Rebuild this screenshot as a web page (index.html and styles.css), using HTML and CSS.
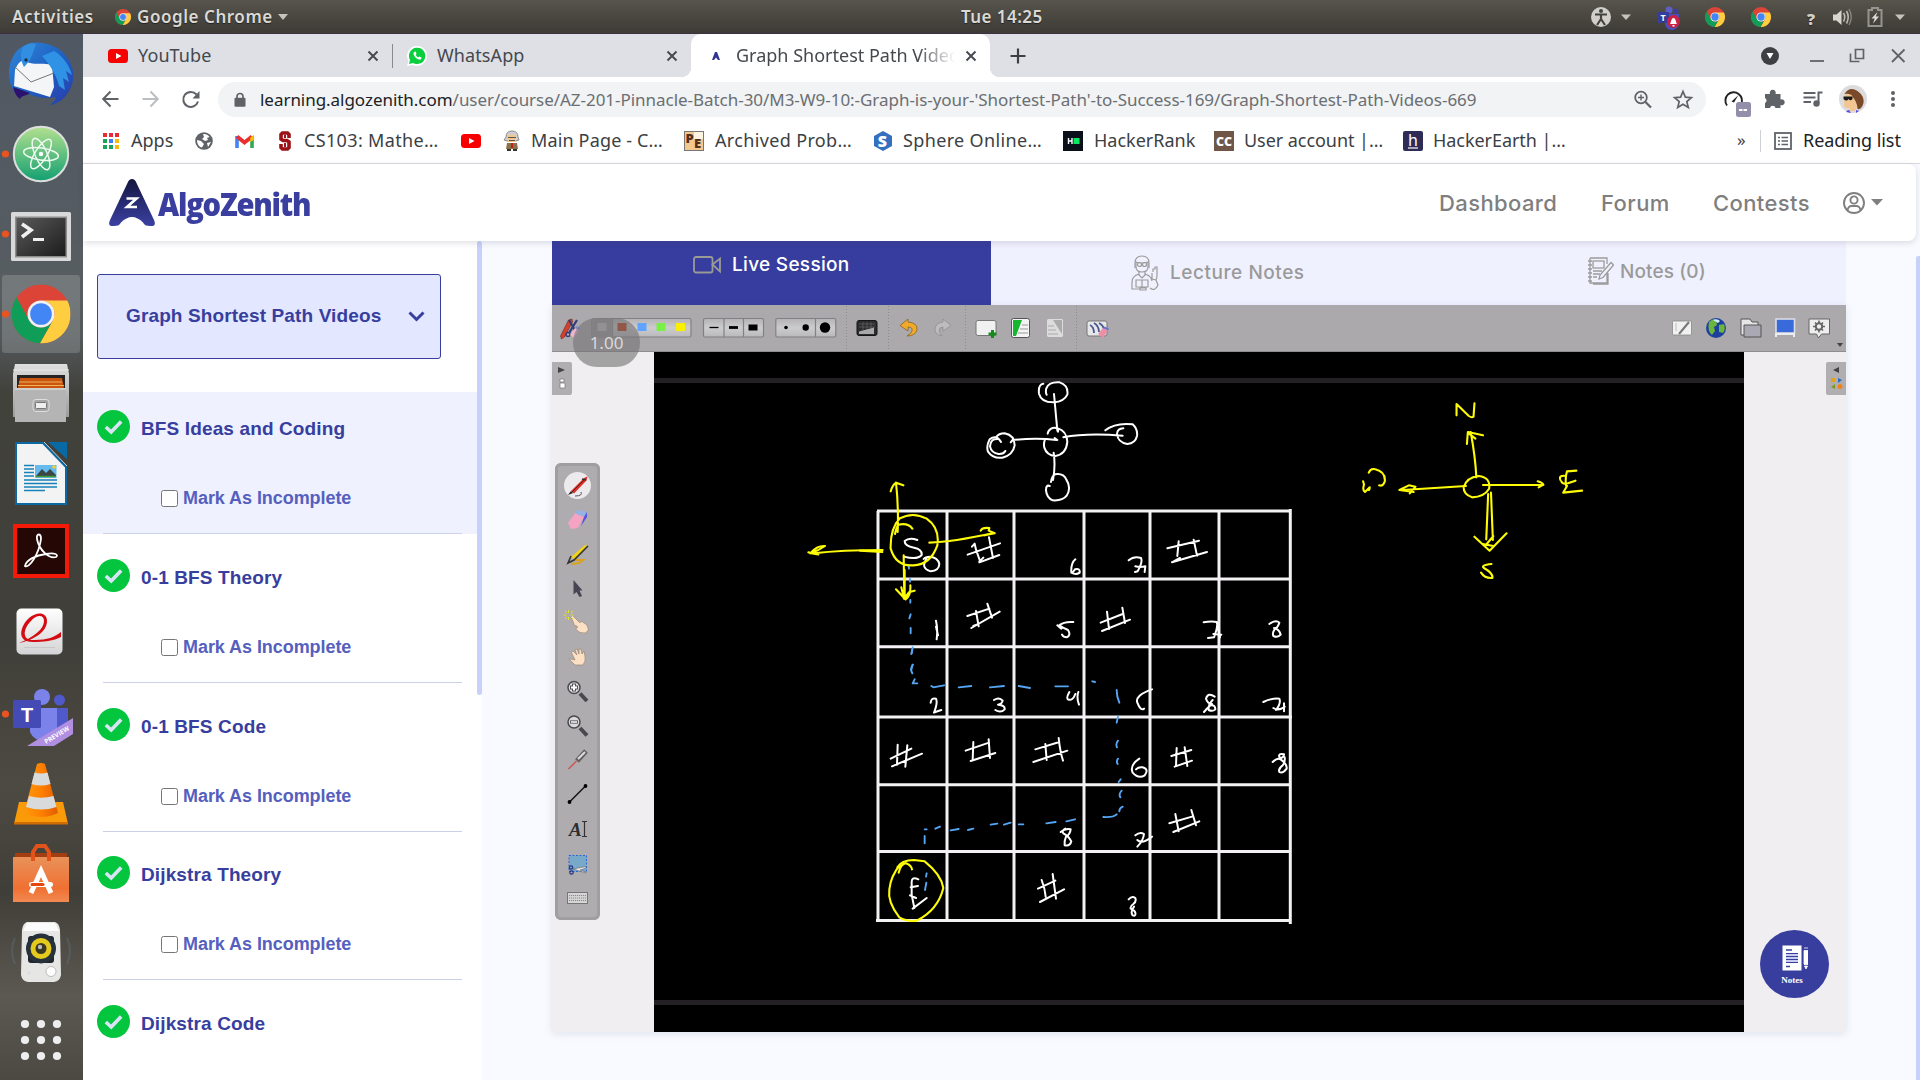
FILE: index.html
```html
<!DOCTYPE html>
<html lang="en">
<head>
<meta charset="utf-8">
<title>Graph Shortest Path Videos</title>
<link rel="stylesheet" href="styles.css">
</head>
<body>
<svg class="defs" aria-hidden="true">
  <defs>
    <linearGradient id="gAtom" x1="0" y1="0" x2="0" y2="1"><stop offset="0" stop-color="#b3e08f"/><stop offset="1" stop-color="#12a071"/></linearGradient>
    <linearGradient id="gMetal" x1="0" y1="0" x2="0" y2="1"><stop offset="0" stop-color="#dedede"/><stop offset="1" stop-color="#9c9c9c"/></linearGradient>
    <linearGradient id="gTerm" x1="0" y1="0" x2="1" y2="1"><stop offset="0" stop-color="#5a5a5a"/><stop offset="1" stop-color="#1c1c1c"/></linearGradient>
    <linearGradient id="gWhite" x1="0" y1="0" x2="0" y2="1"><stop offset="0" stop-color="#fff"/><stop offset="1" stop-color="#d4d4d6"/></linearGradient>
    <linearGradient id="gOrange" x1="0" y1="0" x2="1" y2="0"><stop offset="0" stop-color="#ff9a0a"/><stop offset=".5" stop-color="#ff8000"/><stop offset="1" stop-color="#e05c00"/></linearGradient>
    <linearGradient id="gBag" x1="0" y1="0" x2="0" y2="1"><stop offset="0" stop-color="#e8925a"/><stop offset=".7" stop-color="#f07033"/><stop offset="1" stop-color="#f28a52"/></linearGradient>
    <linearGradient id="gBird" x1="0" y1="0" x2="1" y2="1"><stop offset="0" stop-color="#2f86d8"/><stop offset=".5" stop-color="#1f62c4"/><stop offset="1" stop-color="#2a3aa8"/></linearGradient>
    <linearGradient id="gLogo" x1="0" y1="0" x2="0" y2="1"><stop offset="0" stop-color="#14163f"/><stop offset="1" stop-color="#3b41a3"/></linearGradient>
    <linearGradient id="gGroup" x1="0" y1="0" x2="0" y2="1"><stop offset="0" stop-color="#b4b2b4"/><stop offset=".5" stop-color="#cccbcd"/><stop offset="1" stop-color="#b9b8ba"/></linearGradient>
    <symbol id="chrome" viewBox="0 0 48 48">
      <circle cx="24" cy="24" r="24" fill="#db4437"/>
      <path fill="#ffcd40" d="M24 13h21.4A24 24 0 0 1 23 48l10.500-18.500A11 11 0 0 0 24 13z"/>
      <path fill="#0f9d58" d="M23 48A24 24 0 0 1 4.200 10.500L14.500 29.500a11 11 0 0 0 19 0z"/>
      <circle cx="24" cy="24" r="11" fill="#f1f1f1"/><circle cx="24" cy="24" r="8.800" fill="#4285f4"/>
    </symbol>
    <symbol id="youtube" viewBox="0 0 20 16"><rect y="1" width="20" height="14" rx="3.500" fill="#f60002"/><path d="M8 5l5.500 3L8 11z" fill="#fff"/></symbol>
    <symbol id="close" viewBox="0 0 12 12"><path d="M1.500 1.500l9 9m0-9l-9 9" stroke="#45484d" stroke-width="1.900"/></symbol>
    <symbol id="done" viewBox="0 0 33 33"><circle cx="16.500" cy="16.500" r="16.500" fill="#04c53e"/><path d="M8.800 17l5.400 5L24.200 11.500" fill="none" stroke="#d8e3f5" stroke-width="3.600"/></symbol>
  </defs>
</svg>

<header class="topbar">
  <span class="activities">Activities</span>
  <svg class="mini-chrome" width="16" height="18"><use href="#chrome"/></svg>
  <span class="appname">Google Chrome</span>
  <svg class="menu-caret" width="10" height="6"><path d="M0 0h10L5 6z" fill="#c5c3bd"/></svg>
  <span class="clock">Tue 14:25</span>
  <svg class="tray" viewBox="1580 0 340 34" width="340" height="34">
    <circle cx="1601" cy="17" r="10" fill="#d0cfcb"/>
    <circle cx="1601" cy="11" r="2" fill="#45433d"/><path d="M1595 14.500h12M1601 14v5l-4 6M1601 19l4 6" stroke="#45433d" stroke-width="2.200" fill="none"/>
    <path d="M1621 14.500h10l-5 5.500z" fill="#c5c3bd"/>
    <circle cx="1669" cy="10" r="3.500" fill="#5b5fc7"/><circle cx="1676" cy="11" r="2.500" fill="#3d3fa0"/><path d="M1665 14h14v8a7 7 0 0 1-14 2z" fill="#4b4fb8"/><rect x="1658" y="12" width="11" height="11" fill="#373c9f"/>
    <text x="1660.500" y="21" font-family="Open Sans" font-weight="700" font-size="9" fill="#fff">T</text>
    <circle cx="1673.500" cy="21.500" r="6.500" fill="#c92246"/><path d="M1670 24c1-1 1-6 3.500-6s2.500 5 3.500 6zM1672.500 25h2v1.500h-2z" fill="#fff"/>
    <use href="#chrome" x="1705" y="7" width="20" height="20"/><use href="#chrome" x="1751" y="7" width="20" height="20"/>
    <text x="1807" y="25" font-family="Open Sans" font-weight="800" font-size="16" fill="#d2d0cb">?</text>
    <path d="M1833 14.500h3.500l5-4.500v15l-5-4.500h-3.500z" fill="#d6d5d0"/><path d="M1843.500 13q2.500 4 0 8.500M1846.500 11q3.500 6 0 12.500" stroke="#bbb9b3" stroke-width="1.600" fill="none"/><path d="M1849 9q4.500 8 0 16" stroke="#88867f" stroke-width="1.400" fill="none"/>
    <path d="M1872 8h6v2h3.500v16h-13V10h3.500z" fill="none" stroke="#96948e" stroke-width="2"/><path d="M1877.500 12l-6 6.500h3.200l-1.700 5 6-7h-3.200z" fill="#dddcd8"/>
    <path d="M1895 14.500h10l-5 5.500z" fill="#c5c3bd"/>
  </svg>
</header>

<div class="desktop">
  <nav class="dock">
    <svg viewBox="0 34 83 80">
      <path d="M29 44c8-3 20-1 30 5 10 8 16 20 14 31-2 12-11 24-24 25 4-2 6-4 7-8-12 3-25-1-33-6l-3 7c-6-5-10-12-11-21-1-13 4-25 14-31z" fill="url(#gBird)"/>
      <path d="M15 70c3-7 6-10 10-9 8 5 16 1 27 4l2 22-4 10-36-11z" fill="#f4f5f7"/><path d="M14 66l17 16 23-9" fill="none" stroke="#777" stroke-width="1"/>
      <path d="M54 51c9 5 15 14 18 24l-6-4 3 11-6-4 2 12-6-4c-3-13-10-22-17-30z" fill="#2f92e4"/><path d="M22 49c2-4 8-7 14-5-3 8-5 17-12 23-3-6-4-12-2-18z" fill="#328ee0"/><circle cx="26" cy="60" r="1.700" fill="#1c2a46"/>
      <path d="M13 87l17 6c-4 3-8 2-10 6-3-2-6-7-7-12z" fill="#2a126e"/>
    </svg>
    <svg viewBox="0 114 83 80"><circle cx="5.500" cy="154" r="3.600" fill="#e95420"/><circle cx="41" cy="154" r="27.200" fill="url(#gAtom)" stroke="#dcdfdd" stroke-width="2"/>
      <g fill="none" stroke="#eefaf0" stroke-width="1.500"><ellipse cx="41" cy="154" rx="17.500" ry="6" transform="rotate(8 41 154)"/><ellipse cx="41" cy="154" rx="17" ry="6" transform="rotate(66 41 154)"/><ellipse cx="41" cy="154" rx="17" ry="6" transform="rotate(-58 41 154)"/></g><circle cx="41" cy="154" r="2.200" fill="#fff"/></svg>
    <svg viewBox="0 194 83 80"><circle cx="5.500" cy="234" r="3.600" fill="#e95420"/><rect x="11" y="212" width="60" height="49" rx="1.500" fill="#d9d9d9"/><rect x="15" y="216.500" width="52" height="41" fill="#8d8d8d"/><rect x="16.500" y="218" width="49" height="38" fill="url(#gTerm)"/><path d="M22 224l9 6-9 7" fill="none" stroke="#f0f0f0" stroke-width="3.600"/><path d="M33 239.500h11" stroke="#f0f0f0" stroke-width="3"/></svg>
    <svg viewBox="0 274 83 80"><rect x="2" y="275" width="78" height="78" rx="3" fill="#fff" fill-opacity=".17"/><circle cx="5.500" cy="314" r="3.600" fill="#e95420"/><use href="#chrome" x="11.500" y="284.500" width="59" height="59"/></svg>
    <svg viewBox="0 354 83 80"><path d="M15 364h52l2 10v43H13v-43z" fill="url(#gMetal)"/><path d="M13 370h56" stroke="#e9e9e9"/><rect x="17" y="375" width="48" height="14" fill="#262322"/><path d="M20 378h42l2 10H18z" fill="#c9550f"/><path d="M19 382h43M18 385.500h46" stroke="#f2b25c" stroke-width="1.200"/><path d="M15 388h51v34H15z" fill="#b4b4b4"/><path d="M15 389h51" stroke="#d9d9d9" stroke-width="1.500"/><rect x="33" y="399.500" width="16" height="12" rx="3" fill="#a6a6a6" stroke="#dedede"/><rect x="35.500" y="402.500" width="11" height="6" rx="1" fill="#eee" stroke="#777"/></svg>
    <svg viewBox="0 434 83 80"><path d="M16 443h27l23 24v37H16z" fill="#f3f3f4" stroke="#0c68a3" stroke-width="2"/><path d="M48 442h19v17z" fill="#0869a5"/><path d="M44 442l23 24" stroke="#cfcfcf"/><path d="M24 465.500h10M24 469h10M24 472.500h10M24 476h10M24 480h33M24 483.500h33M24 487h33M24 490.500h21" stroke="#1682bb" stroke-width="1.600"/><rect x="35" y="465" width="21.500" height="13" fill="#66bbee"/><path d="M36 476l6-7 4 4 4-4 6 6v1z" fill="#3b4647"/><path d="M36 476.500h20" stroke="#3f9a3a" stroke-width="1.500"/><circle cx="54" cy="467" r="1.800" fill="#f6cf2b"/></svg>
    <svg viewBox="0 514 83 80"><rect x="15" y="526" width="52" height="50" fill="#250706" stroke="#f51a08" stroke-width="4"/><path d="M25 566c4 3 14-12 16-27 0-6-5-6-4 0 2 11 12 20 19 18 3-2-1-5-10-3-10 1-20 6-21 12z" fill="none" stroke="#fff" stroke-width="1.800"/></svg>
    <svg viewBox="0 594 83 80"><rect x="16.500" y="608.500" width="46" height="46" rx="5" fill="url(#gWhite)"/><path d="M19 643c15-6 25-14 25-22 0-7-8-6-13 0-8 8-10 20 4 19 12 0 20-3 26-8v5c-7 4-18 5-28 5-18 0-12-17-4-24 8-7 18-6 18 3 0 11-13 19-28 22z" fill="#d40d12"/><path d="M24 647.500h31" stroke="#c8c8c8"/></svg>
    <svg viewBox="0 674 83 80"><circle cx="5.500" cy="714" r="3.600" fill="#e95420"/><circle cx="42" cy="697" r="8" fill="#7b83eb"/><circle cx="59.500" cy="700" r="5.500" fill="#5059c9"/><path d="M50 708h18v24H50z" fill="#5059c9"/><path d="M30 708h27v20a14 14 0 0 1-27 4z" fill="#7b83eb"/><rect x="13" y="700" width="28" height="28" rx="1.500" fill="#454bb5"/><text x="21" y="721.500" font-family="Liberation Sans" font-weight="700" font-size="20" fill="#fff">T</text><path d="M27 746l46-28v16l-19 12z" fill="#b08ee2"/><text transform="translate(46 744) rotate(-31)" font-family="Open Sans" font-weight="700" font-size="6.400" fill="#fff">PREVIEW</text></svg>
    <svg viewBox="0 754 83 80"><path d="M19 802h44l5 22H14z" fill="#fb9a09"/><path d="M14 822h54v2.500H14z" fill="#cf6d00"/><path d="M37 764q4-2 8 0l13 49q-17 8-34 0z" fill="url(#gOrange)"/><path d="M34.500 772.500q6.500 2 13 0l3 11.500q-9.500 3-19 0zM29 796q12 3.500 24.500 0l3 11q-15 5-30.500 0z" fill="#d9dadc"/></svg>
    <svg viewBox="0 834 83 80"><path d="M15 853h52v9H15z" fill="#a33e12"/><path d="M13 857h56v45H13z" fill="url(#gBag)"/><path d="M33 861v-9l4-6h8l4 6v9" fill="none" stroke="#e2531c" stroke-width="4"/><path d="M31 893l10-22 10 22" fill="none" stroke="#fff" stroke-width="5"/><rect x="29" y="882" width="24" height="5" rx="2.500" fill="#fff"/><rect x="30.500" y="883" width="14" height="3" rx="1.500" fill="#e5470f"/></svg>
    <svg viewBox="0 914 83 80"><path d="M15 938q-6 12 0 26M67 938q6 12 0 26" fill="none" stroke="#65778a" stroke-opacity=".35" stroke-width="2"/><path d="M27 922h28q4 1 5 8l1 45q-1 6-7 7H28q-6-1-7-7l1-45q1-7 5-8z" fill="#e6e6e5"/><path d="M27 923h28l4 8H23z" fill="#fbfbfb"/><rect x="28" y="936" width="26" height="27" rx="3" fill="#20262c"/><circle cx="41" cy="948.500" r="15" fill="#26313c"/><circle cx="41" cy="948.500" r="10.500" fill="#e3ca1d"/><circle cx="41" cy="948.500" r="5.500" fill="#3a3823"/><circle cx="40" cy="947" r="2.200" fill="#bbb"/><circle cx="51" cy="971.500" r="5" fill="#fff" stroke="#bbb"/><circle cx="29" cy="973" r="1.800" fill="#ddd"/></svg>
    <svg viewBox="0 994 83 80" fill="#eee"><circle cx="25" cy="1024" r="4.100"/><circle cx="41" cy="1024" r="4.100"/><circle cx="57" cy="1024" r="4.100"/><circle cx="25" cy="1040" r="4.100"/><circle cx="41" cy="1040" r="4.100"/><circle cx="57" cy="1040" r="4.100"/><circle cx="25" cy="1056" r="4.100"/><circle cx="41" cy="1056" r="4.100"/><circle cx="57" cy="1056" r="4.100"/></svg>
  </nav>

  <div class="browser">
    <div class="tabstrip">
      <div class="tab tab-first"><svg width="20" height="16"><use href="#youtube"/></svg><span class="tab-title t-yt">YouTube</span><svg class="x" width="12" height="12"><use href="#close"/></svg></div>
      <div class="tab tab-second"><svg width="20" height="20" viewBox="0 0 20 20"><path d="M0 20l1.500-5A10 10 0 1 1 6 19z" fill="#fff"/><path d="M2 18l1-4a8.200 8.200 0 1 1 3 3z" fill="#09ce3d"/><path d="M7 6c-2 3 3 8.500 7 7.500l.5-2-2.300-1-1 1c-1-.5-2-1.500-2.500-2.700l.8-1L8.700 5.500z" fill="#fff"/></svg><span class="tab-title t-wa">WhatsApp</span><svg class="x" width="12" height="12"><use href="#close"/></svg></div>
      <div class="tab tab-active"><svg width="8" height="8" viewBox="0 0 8 8"><path d="M3 0h2l3 8H6L4 5.500 2 8H0z" fill="#2f368f"/></svg><span class="tab-title t-az">Graph Shortest Path Videos</span><svg class="x" width="12" height="12"><use href="#close"/></svg></div>
      <svg class="newtab" width="16" height="16"><path d="M8 0.500v15M.5 8h15" stroke="#3c4043" stroke-width="2.200"/></svg>
      <svg class="winctl" viewBox="1750 34 170 43" width="170" height="43"><circle cx="1770" cy="56" r="9" fill="#3c4043"/><path d="M1766.500 53h7l-3.500 6z" fill="#fff"/><path d="M1810 61h14" stroke="#5f6368" stroke-width="1.800"/><path d="M1855.500 49.500h8v9h-8zM1850.500 53.500v8h9" fill="none" stroke="#5f6368" stroke-width="1.700"/><path d="M1892 49.500l12.500 12.500m0-12.500L1892 62" stroke="#5f6368" stroke-width="1.800"/></svg>
    </div>
    <div class="toolbar">
      <svg class="navicons" viewBox="83 77 135 45" width="135" height="45" fill="none" stroke-width="2"><path d="M118.500 99H103.500m7-7.500l-7.300 7.500 7.300 7.500" stroke="#5f6368"/><path d="M142.500 99h15m-7-7.500l7.300 7.500-7.300 7.500" stroke="#bcbec2"/><path d="M196.500 94.500a7.500 7.500 0 1 0 1.500 7" stroke="#5f6368"/><path d="M199.500 91v7.500h-7z" fill="#5f6368"/></svg>
      <div class="omnibox">
        <svg width="12" height="16" viewBox="0 0 12 16"><path d="M3 7V4.500a3 3 0 0 1 6 0V7" fill="none" stroke="#5f6368" stroke-width="1.700"/><rect x=".5" y="5.800" width="11" height="9" rx="1" fill="#5f6368"/></svg>
        <span class="url"><b>learning.algozenith.com</b>/user/course/AZ-201-Pinnacle-Batch-30/M3-W9-10:-Graph-is-your-'Shortest-Path'-to-Success-169/Graph-Shortest-Path-Videos-669</span>
        <svg class="omni-icons" viewBox="1630 82 70 35" width="70" height="35" fill="none" stroke="#5f6368"><circle cx="1641" cy="97.500" r="5.800" stroke-width="1.800"/><path d="M1645.500 102l5.500 5.500" stroke-width="2.200"/><path d="M1638 97.500h6m-3-3v6" stroke-width="1.400"/><path d="M1683 91.500l2.400 5.600 6 .5-4.600 4 1.500 5.900-5.300-3.200-5.300 3.200 1.500-5.900-4.600-4 6-.5z" stroke-width="1.700"/></svg>
      </div>
      <svg class="exticons" viewBox="1706 77 214 45" width="214" height="45">
        <path d="M1727 105.500a8.300 8.300 0 1 1 14-1" fill="none" stroke="#222" stroke-width="1.900"/><path d="M1731.500 101.500l7-6.500-4.500 7.500z" fill="#222"/><rect x="1736" y="102" width="15" height="15" rx="2.500" fill="#938ea9"/><path d="M1739 110h3.500m1 0h3.500" stroke="#fff" stroke-width="2"/>
        <path d="M1765 94h5a3 3 0 1 1 5.500 0h5v5.500a3 3 0 1 1 0 5.500v3h-5a2.800 2.800 0 0 0-5.500 0h-5v-5a2.800 2.800 0 0 0 0-5z" fill="#5f6368"/>
        <path d="M1803.500 93h12M1803.500 97.500h12M1803.500 102h7.500" stroke="#5f6368" stroke-width="1.800"/><path d="M1818.500 103V92.500h4" stroke="#5f6368" stroke-width="2" fill="none"/><circle cx="1816.500" cy="103.500" r="3.200" fill="#5f6368"/>
        <circle cx="1853" cy="99" r="14" fill="#dcdcdd"/><path d="M1845 93q4-5 10-1l4 7-2 8-2 4h-6l1-3q-5 1-6-3z" fill="#f2c693"/><path d="M1844.500 94q5-8 13-3 7 5 6 12-2 7-6 6 0-4-2-8l-4-6q-4-2-7-1z" fill="#7a4a28"/><path d="M1843.500 96.500h9v2.500q-2 2.500-4 0-2 3-5 0z" fill="#1a1a1a"/><path d="M1846 112q1-2 3-2l2 3zM1856 110l3 1-3 2z" fill="#5a4fe0"/>
        <g fill="#5f6368"><circle cx="1893" cy="93" r="2"/><circle cx="1893" cy="99" r="2"/><circle cx="1893" cy="105" r="2"/></g>
      </svg>
    </div>
    <div class="bookmarks">
      <div class="bm"><svg width="18" height="18" viewBox="0 0 18 18"><path d="M1 3h4M7 3h4M13 3h4" stroke="#ea2a35" stroke-width="4"/><path d="M1 9h4" stroke="#1ba35a" stroke-width="4"/><path d="M7 9h4" stroke="#3f7df0" stroke-width="4"/><path d="M13 9h4M13 15h4" stroke="#f9b914" stroke-width="4"/><path d="M1 15h4M7 15h4" stroke="#1ba35a" stroke-width="4"/></svg><span>Apps</span></div>
      <div class="bm"><svg width="18" height="18" viewBox="0 0 18 18"><circle cx="9" cy="9" r="8.800" fill="#5f6368"/><path d="M2 8l4 1 3 3-2 3.500C4 15 2 12 2 8zM8 2c4 0 5 1 6.500 3L12 6l1 2-3 1-3-2 2-2zM12 11l4-1-3 5z" fill="#fff"/></svg></div>
      <div class="bm"><svg width="19" height="18" viewBox="0 0 19 18"><path d="M2 16V4" stroke="#4285f4" stroke-width="3.600"/><path d="M17 16V4" stroke="#34a853" stroke-width="3.600"/><path d="M2 4.500l7.500 6 7.500-6" stroke="#ea2f2f" stroke-width="4" fill="none"/><path d="M15.200 5.800l3.600-3V8l-3.600 2z" fill="#fbbc04"/></svg></div>
      <div class="bm bm-wide"><svg width="16" height="20" viewBox="0 0 16 20"><path d="M12 7V3.500L10.500 2h-5L4 3.500V8l2 1.500h4l2 1.500v5.500L10.500 18h-5L4 16.500V13" fill="none" stroke="#9c1219" stroke-width="3.600"/><path d="M8 4v3M8 12v4" stroke="#9c1219" stroke-width="2"/></svg><span>CS103: Mathe…</span></div>
      <div class="bm"><svg width="20" height="16"><use href="#youtube"/></svg></div>
      <div class="bm bm-main"><svg width="18" height="20" viewBox="0 0 18 20"><path d="M3 6q0-6 6-6t6 6l1 3-3 1H4L1 9z" fill="#cfcfcf" stroke="#8b8b8b"/><rect x="5" y="4" width="8" height="7" fill="#f3c78c"/><path d="M5 6.500h8M6 9.500h6" stroke="#555"/><path d="M4 12h10l1 6H3z" fill="#8b7048"/><path d="M9 12v5" stroke="#b22" stroke-width="2"/><path d="M4 19h4m2 0h4" stroke="#333" stroke-width="2"/></svg><span>Main Page - C…</span></div>
      <div class="bm bm-wide"><svg width="20" height="20" viewBox="0 0 20 20"><rect x=".5" y=".5" width="19" height="19" fill="#f3c88f" stroke="#777"/><rect x="10" y="1" width="9" height="7" fill="#fff3e2"/><text x="1.500" y="12" font-family="Open Sans" font-weight="800" font-size="13" fill="#55301c">P</text><text x="10" y="17" font-family="Open Sans" font-weight="800" font-size="13" fill="#55301c">E</text></svg><span>Archived Prob…</span></div>
      <div class="bm bm-wide"><svg width="18" height="20" viewBox="0 0 18 20"><path d="M9 0l9 5v10l-9 5-9-5V5z" fill="#3570c0"/><text x="3.800" y="15.500" font-family="Open Sans" font-weight="800" font-size="16" fill="#fff">S</text></svg><span>Sphere Online…</span></div>
      <div class="bm"><svg width="20" height="20" viewBox="0 0 20 20"><rect width="20" height="20" fill="#0b0f19"/><path d="M5.500 7v6M9 7v6M5.500 10H9" stroke="#fff" stroke-width="1.400"/><rect x="10.500" y="7" width="6" height="6" fill="#05e862"/></svg><span>HackerRank</span></div>
      <div class="bm bm-tight"><svg width="20" height="20" viewBox="0 0 20 20"><rect width="20" height="20" fill="#6f5646"/><text x="2" y="14.500" font-family="Open Sans" font-weight="800" font-size="13" textLength="16" lengthAdjust="spacingAndGlyphs" fill="#fff">CC</text></svg><span>User account |…</span></div>
      <div class="bm bm-tight"><svg width="20" height="20" viewBox="0 0 20 20"><rect width="20" height="20" rx="2" fill="#2f2b57"/><text x="5" y="14.500" font-family="Noto Sans" font-size="16" fill="#fff">h</text><path d="M5 17h10" stroke="#fff" stroke-width="1.200"/></svg><span>HackerEarth |…</span></div>
      <span class="more">»</span>
      <div class="reading"><svg width="18" height="18" viewBox="0 0 18 18"><rect x="1" y="1" width="16" height="16" fill="none" stroke="#5f6368" stroke-width="1.800"/><path d="M4 5.500h2M4 9h2M4 12.500h2M7.500 5.500H14M7.500 9H14M7.500 12.500H14" stroke="#5f6368" stroke-width="1.700"/></svg><span>Reading list</span></div>
    </div>

    <div class="page">
      <header class="site-header">
        <svg width="46" height="47" viewBox="0 0 46 47"><path d="M23 0q3 0 4.500 4L45 41q3 7-4 6l-4-.5q-2-1-3-3-11-11-22 0-1 2-3 3L5 47q-7 1-4-6L18.500 4Q20 0 23 0z" fill="url(#gLogo)"/><path d="M17.500 19.500h10l-9.500 8.500h10" fill="none" stroke="#fff" stroke-width="2.600"/></svg>
        <span class="brand">AlgoZenith</span>
        <nav class="site-nav"><a class="n1">Dashboard</a><a class="n2">Forum</a><a class="n3">Contests</a>
          <svg width="40" height="22" viewBox="0 0 40 22" fill="none" stroke="#7f7f7f" stroke-width="1.900"><circle cx="11" cy="11" r="10"/><circle cx="11" cy="8" r="3.600"/><path d="M4.500 18q1-4 4-4h5q3 0 4 4"/><path d="M28 7h12l-6 6.500z" fill="#7f7f7f" stroke="none"/></svg></nav>
      </header>
      <div class="content">
        <aside class="sidebar">
          <div class="select"><span>Graph Shortest Path Videos</span><svg width="17" height="11" viewBox="0 0 17 11"><path d="M1.500 1.500l7 7 7-7" fill="none" stroke="#373e9e" stroke-width="3"/></svg></div>
          <ul class="lessons">
            <li class="current"><div class="row"><svg width="33" height="33"><use href="#done"/></svg><span>BFS Ideas and Coding</span></div><label><input type="checkbox">Mark As Incomplete</label></li>
            <li><div class="row"><svg width="33" height="33"><use href="#done"/></svg><span>0-1 BFS Theory</span></div><label><input type="checkbox">Mark As Incomplete</label></li>
            <li><div class="row"><svg width="33" height="33"><use href="#done"/></svg><span>0-1 BFS Code</span></div><label><input type="checkbox">Mark As Incomplete</label></li>
            <li><div class="row"><svg width="33" height="33"><use href="#done"/></svg><span>Dijkstra Theory</span></div><label><input type="checkbox">Mark As Incomplete</label></li>
            <li><div class="row"><svg width="33" height="33"><use href="#done"/></svg><span>Dijkstra Code</span></div></li>
          </ul>
          <i class="scroll-side"></i>
        </aside>

        <main class="lesson">
          <div class="viewtabs">
            <div class="vt vt-live"><svg width="28" height="18" viewBox="0 0 28 18" fill="none" stroke="#9a9a96" stroke-width="1.800"><rect x="1" y="1" width="18.500" height="15.500" rx="2"/><path d="M19.500 8.500L27 2.500v13z"/></svg><span>Live Session</span></div>
            <div class="vt vt-lecture"><svg width="28" height="36" viewBox="0 0 28 36" fill="none" stroke="#9c9c9c" stroke-width="1.200"><path d="M4 13V8q0-7 7-7t7 7v5"/><path d="M5 7q5 2 12 0v5q0 5-6 5t-6-5z"/><circle cx="8.500" cy="9.500" r="2"/><circle cx="13.500" cy="9.500" r="2"/><path d="M8 17v3l3 3 3-3v-3M8 19q-7 2-7 8v7h8M14 19q4 1 6 4l1 3M5 25v7h6V25zM11 25v7h6v-7zM9 33h6v2H9zM22 17v-3h2v-2h2v8q0 3-1 5l2 5q-3 7-8 3M21 18v6l4 1"/></svg><span>Lecture Notes</span></div>
            <div class="vt vt-notes"><svg width="27" height="28" viewBox="0 0 27 28" fill="none" stroke="#9c9c9c" stroke-width="1.300"><path d="M3 1h17v6M20 16v10H3V1M21 16v11H6"/><rect x="6" y="4" width="11" height="7"/><path d="M1 4h4M1 8h4M1 12h4M1 16h4M1 20h4M1 24h4M6 14h9M6 17h7M6 20h4"/><path d="M12 22l1-4L24 5.500l2.500 2.500L16 20.500z" fill="#f0f1ff"/></svg><span>Notes (0)</span></div>
          </div>
          <div class="video">
            <svg class="boardbar" viewBox="552 305 1294 47" width="1294" height="47">
              <path d="M560.500 336l8-16 3.500-1 .5 3-8 15-3 2z" fill="#d2402d" stroke="#6d2a22" stroke-width=".6"/><path d="M577 320l-8 13M569 320l7 12" stroke="#353d78" stroke-width="2.200"/><circle cx="568" cy="334.500" r="2" fill="none" stroke="#353d78" stroke-width="1.400"/><path d="M570 335l5-7 4 2-5 8z" fill="#f0b5cf"/><path d="M575 328l2-2 3 2-1 2z" fill="#7a86d8"/>
              <g fill="url(#gGroup)" stroke="#828084" stroke-width="1.200"><rect x="592" y="318.500" width="99" height="18.500" rx="1.500"/><rect x="703.500" y="318.500" width="60" height="18.500" rx="1.500"/><rect x="775.800" y="318.500" width="60" height="18.500" rx="1.500"/></g>
              <path d="M612.500 318v19M724 318v19M743.500 318v19M815.500 318v19" stroke="#828084" stroke-width="1.200"/><path d="M592.500 318.500h20v18.500h-20z" fill="#999799"/>
              <rect x="597.500" y="323" width="9" height="8" fill="#c2c2c2"/><rect x="617.500" y="323" width="9" height="8" fill="#bd2800"/><rect x="637.500" y="323" width="9" height="8" fill="#60a4ff"/><rect x="656.500" y="323" width="9" height="8" fill="#7af047"/><rect x="676" y="323" width="9" height="8" fill="#f8f000"/>
              <path d="M709.500 327.500h9" stroke="#000" stroke-width="1.300"/><path d="M729 327.500h9" stroke="#000" stroke-width="2.800"/><path d="M748.500 327.500h9" stroke="#000" stroke-width="6"/>
              <circle cx="786" cy="327.500" r="1.800"/><circle cx="805.700" cy="327.500" r="3.200"/><circle cx="825" cy="327.500" r="5.200"/>
              <path d="M846.500 306v44M888.500 306v44M965.500 306v44M1076.500 306v44" stroke="#8c8a8c" stroke-dasharray="1 2"/>
              <rect x="857" y="320.500" width="20" height="15" rx="2" fill="#2c2c2e" stroke="#151515"/><path d="M859 324h16M859 327h16M863 322v8M867 322v7M871 322v6" stroke="#666" stroke-width=".7"/><path d="M859 334v-2.500l15-4v6.500z" fill="#a9a9a9"/>
              <path d="M908 319l-8 6.500 8 5.500v-4q5 0 4 4-1 3-5 5 8 0 10-6 1-7-9-8z" fill="#f0a92b" stroke="#8a6320" stroke-width=".8"/>
              <path d="M943 319l8 6.500-8 5.500v-4q-4 0-4 4 1 3 3 5-6-1-7-6 0-7 8-8z" fill="#bdbcbe" stroke="#8f8e90" stroke-width=".8"/>
              <rect x="976" y="320.500" width="20" height="15" rx="2" fill="#f1f1f1" stroke="#777"/><path d="M992.500 330v8M988.500 334h8" stroke="#168a1c" stroke-width="3"/>
              <rect x="1011.500" y="318.500" width="18" height="19" rx="2" fill="#f4f4f4" stroke="#555"/><path d="M1013 320h9l-6 16h-3z" fill="#16b631"/><path d="M1022 325h6M1020 329h8M1018 333h10" stroke="#999"/>
              <rect x="1046.500" y="318.500" width="17" height="19" rx="2" fill="#dcdcdc" stroke="#aaa"/><path d="M1053 320h9v14z" fill="#aaa"/><path d="M1048 326h6M1048 330h8M1048 334h10" stroke="#aaa"/>
              <rect x="1087" y="321" width="20" height="15" rx="2" fill="#e7e7ea" stroke="#777"/><path d="M1090 325q4 2 4 8M1094 323q5 3 5 9M1099 323q4 2 5 6" stroke="#49598d" stroke-width="1.800" fill="none"/><path d="M1098 334l5-6 5 2.500-5 7.500z" fill="#eb8fa8"/><path d="M1103 328l1.500-1.500 4.500 2-1 2z" fill="#6b74c9"/>
              <rect x="1672.500" y="321" width="19" height="14" rx="1" fill="#f1f1f1" stroke="#888" stroke-width=".8"/><path d="M1679 334l10-12" stroke="#777" stroke-width="2"/><path d="M1676 323v8" stroke="#bbb"/>
              <circle cx="1716" cy="328" r="10" fill="#1d3f9d"/><path d="M1709 322q4-4 7-2l1 5-3 2 1 4-3 4q-5-4-3-13zM1719 325l5-1q2 5-1 9l-4-1z" fill="#6bb53a"/><path d="M1713 320q4-2 7 1l-2 2z" fill="#d5ebff"/>
              <path d="M1741 319h9l2 3h6v13h-17z" fill="#e5e5e8" stroke="#555"/><path d="M1744 325h17v12h-17z" fill="#a9a8b3" stroke="#555"/>
              <rect x="1776" y="319" width="18.500" height="14" fill="#386ada" stroke="#dadde5" stroke-width="1.600"/><path d="M1776 337v-3h18v3" fill="none" stroke="#ececee" stroke-width="2"/>
              <path d="M1809 319h20.500v15h-8l-3 4-2-4H1809z" fill="#eee" stroke="#666"/><circle cx="1819" cy="326.500" r="3.200" fill="none" stroke="#666" stroke-width="2"/><path d="M1819 320.500v3M1819 329.500v3M1813 326.500h3M1822 326.500h3M1815 322.500l2 2M1821 328.500l2 2M1823 322.500l-2 2M1817 328.500l-2 2" stroke="#666" stroke-width="1.600"/>
              <path d="M1837 343h6l-3 4z" fill="#444"/><path d="M552 351.500h1294" stroke="#8f8d8f"/>
            </svg>
            <div class="stage">
              <div class="gutter gutter-left">
                <svg class="flap" width="20" height="33" viewBox="0 0 20 33"><path d="M0 0h18q2 0 2 2v29q0 2-2 2H0z" fill="#b0aeb0"/><path d="M6 5l7 3-7 3z" fill="#444"/><path d="M8 17h4v3H8zM8 21h5v5H8z" fill="#fff" stroke="#777" stroke-width=".7"/></svg>
                <div class="palette">
                <svg viewBox="555 463 45 457" width="45" height="457">
                  <circle cx="577.500" cy="485.500" r="13.500" fill="#eceaec"/><path d="M571 491l13-13 3.500-1.500-1 4-12.500 13z" fill="#d9302b"/><path d="M571 491l-3 4 5-2z" fill="#222"/><path d="M572 492l12-12" stroke="#5d1714" stroke-width=".9"/><path d="M582 479l4 1" stroke="#333" stroke-width="1.500"/><path d="M575 496q8 0 6-4" fill="none" stroke="#555"/>
                  <path d="M568 523l7-10 9 4-6 11-7 1z" fill="#f5a3c3"/><path d="M575 513l3-3 9 2-3 5z" fill="#94b3e5"/><path d="M584 517l3-5v5l-6 9z" fill="#5a4fe0"/>
                  <path d="M575 560h8l-4 3-8 1" stroke="#dda21b" stroke-width="2" fill="none"/><path d="M571 557l14-12 3 1-13 14z" fill="#f1d11a"/><path d="M571 556l-3 7 6-3 14-14" fill="none" stroke="#333" stroke-width="1.600"/>
                  <path d="M573.500 580v14.500l3-2.500 3 5 2.500-1-2.500-5.500h3z" fill="#474554"/>
                  <path d="M571 616.500l1.500-1 7 7 2.500-1 5 3.500 1.500 5-3 3q-6 1-10-4l2-1.500q0-2-3-2z" fill="#fbe0c6" stroke="#9b8572" stroke-width=".7"/><path d="M568.500 610v3m0 4v3m-5-5h3m4 0h3m-8.500-4l2 2m4 4l2 2m0-8l-2 2m-4 4l-2 2" stroke="#e3df37"/>
                  <path d="M569 659l6 6h8q3-4 2-9l-1-5-2 3-1-5-2 0v5l-2-5-2 1 2 5-4-4-1.500 1.500 3.500 7.500-4-1z" fill="#fbe0c6" stroke="#9b8572" stroke-width=".7"/>
                  <path d="M580 693.500l7 7.500M580 728l7 7.500" stroke="#49484c" stroke-width="4"/><g fill="#dad9dc" stroke="#49484c" stroke-width="1.500"><circle cx="574" cy="687.500" r="6"/><circle cx="574" cy="722" r="6"/></g><path d="M570 687.500h8m-4-4v8" stroke="#55545a" stroke-width="4"/><path d="M571 687.500h6m-3-3v6" stroke="#fff" stroke-width="2"/><path d="M570 722h8" stroke="#66656b" stroke-width="3.400"/><path d="M571 722h6" stroke="#fff" stroke-width="1.400"/>
                  <path d="M577 761l9-10" stroke="#626164" stroke-width="5"/><path d="M578 759l7-7" stroke="#ddd" stroke-width="2"/><path d="M568.500 769l8-8" stroke="#cf5252" stroke-width="1.400"/>
                  <path d="M569 802.500l16.500-16.500" stroke="#111" stroke-width="1.500"/><circle cx="569.500" cy="802" r="1.900"/><circle cx="585.500" cy="786" r="1.900"/>
                  <text x="569" y="836" font-family="Liberation Serif" font-style="italic" font-weight="700" font-size="19" fill="#2e2e30">A</text><path d="M582 821.500h5m-2.500 0v15m-2.500 0h5" stroke="#333" stroke-width="1.200"/>
                  <rect x="569" y="855.500" width="17.500" height="16" fill="#78a9c8" stroke="#2a67d8" stroke-dasharray="2 1.500"/><path d="M573 869l13-2.500v1.500l-6 2 6 2v1z" fill="#e9e9ea" stroke="#666" stroke-width=".6"/><circle cx="571" cy="867.500" r="1.700" fill="none" stroke="#27357c" stroke-width="1.200"/><circle cx="571.500" cy="872.500" r="1.700" fill="none" stroke="#27357c" stroke-width="1.200"/>
                  <rect x="567.500" y="892.500" width="20" height="11" fill="#d5d5d6" stroke="#777"/><path d="M569 895.500h17M569 898h17M569 900.500h17" stroke="#8b8b8c" stroke-dasharray="1.200 .8"/>
                </svg>
                </div>
              </div>
              <svg class="board" viewBox="654 352 1090 680" width="1090" height="680">
                <rect x="654" y="352" width="1090" height="680" fill="#000"/>
                <path d="M654 380.500h1090M654 1002.500h1090" stroke="#232123" stroke-width="5"/>
                <g stroke="#f4f1f4" stroke-width="3" fill="none"><path d="M877 511h413M878 579h412M878 646.700h412M878 717h414M878 784.700h412M878 851.500h412M876 920.500h415M878 511v409M947 511v409M1014 511v409M1084 511v409M1150 511v409M1219 511v409M1290.300 509v415"/></g>
                <!-- neighbour sketch and the upper two rows -->
                <g class="ink" transform="translate(860 370) scale(.33333)">
                  <path d="M550 41q-16 2-13 30 7 27 45 26 30-2 40-23 4-28-23-37-33-2-40 18-3 12 1 19M582 72l10 110M594 185q3-14-16-11-13 5-15 17M594 175q26 8 28 40-3 38-36 43-26-2-33-25-3-12 2-25M592 210l-8-6M590 210q-60-8-132 0l-6 7M423 216q-14-24-34-8-11 20-5 37 15 22 43 18 32-8 37-37 0-30-30-36-18 0-26 12M416 207q-24-3-26 22 4 20 26 23 15 1 20-9M610 202q70-14 178-5M736 181q30-24 82-18 16 15 13 35-5 22-29 24-28-4-31-30 1-16 19-17M581 248q6 40-2 82M573 336q2-17 12-23 26-4 34 16 16 24 1 48-12 16-42 14-18-8-20-30 0-18 11-13"/>
                  <path d="M172 510q-24-9-38 3-1 15 28 20 25 5 23 22-13 15-52 5M200 566q-20 28 12 38 25-2 26-22-4-20-28-22-14 0-19 7M336 530l8-9 4 18 12 34M387 502l12 62M323 554l97-34M358 577l60-22M358 575l12-12M646 568q-14 12-12 40 14 8 25 0 2-14-14-10l-6 8M806 571q16-14 37-7 6 12-10 40l-8 2M826 589q14 4 30 0l-2 17M956 514l-4 44M1001 509l10 48M922 535l95-23M936 577l105-31M940 575l20-11M228 752q6 26 2 56M228 770l6 26M348 723l8 46M382 701l14 42M322 738l66-22M334 774l85-49M340 768l10-4M640 756q-28-2-42 10 8 6 26 14 10 16-4 22-10 0-14-8M592 766l12 10M741 725l6 52M787 713l8 46M722 758l66-26M726 783l84-34M1031 757q22-4 40-1 3 16-9 46l-18 2M1070 756l10 46M1060 792l24 2M1228 762q20-14 30-4-4 14-14 20-8 10-4 20 14 6 22-4-4-16-20-20"/>
                </g>
                <g class="ink" transform="translate(860 650) scale(.33333)">
                  <path d="M212 158q2-16 16-12 6 12-6 42 10-4 22-8M402 150q16-10 26 2-2 10-14 12 22 2 20 14-12 12-28 2M628 126q-10 18-4 22 14 6 22-16M655 126q-6 16 2 38M876 118q-52 18-44 40 10 26 20 18M1064 140q-20-14-26 6 4 14 18 16M1058 150q-14 14-12 30 12 6 20-2 0-14-14-12-10 8-20 20M1210 156q24-12 48-10 6 14-10 34M1240 174q16 10 34-4M1272 160v24"/>
                  <path d="M113 284l-2 60M142 286l-6 64M92 326l62-30M96 349l90-38M340 276l-2 54M386 268l4 56M317 302l70-24M332 333l74-24M556 282l4 48M596 264q4 40 13 68M526 298l72-22M520 336l102-34M838 326q-30 20-20 42 18 20 36 8 14-18-6-24-12-2-20 6M950 294l-2 54M974 292l8 56M934 318l60-18M944 350l52-18M1272 313q-18-4-14 8 10 6 14-6M1238 336q14-14 24-8 20 14 18 28-12 16-22 10-4-10 10-20 8-10 6-24"/>
                  <path d="M602 546q14-12 30-8-2 16-14 22-6 14-4 26 16 4 20-12-8-16-24-24-6-8 6-14M826 556q14-12 26-4-2 20-20 38M832 570q14 14 44-10M946 492l10 52M994 480l14 46M928 520l68-20M940 546l78-32"/>
                  <path d="M175 688q-22-10-20 12v34l8 40M152 712l22-4M150 736l18 8M158 776l42-32M545 690q10 26 12 50M578 672l10 74M534 716l52-24M540 756l72-38M806 748q10-12 20-4 4 10-6 18-10 6-8 14 12 4 14 12 2 12-8 8-8-10 4-26"/>
                </g>
                <g class="ink dash" transform="translate(860 370) scale(.33333)"><path d="M146 586l1 10M150 627v8M151 690v8M152 733l-4 12M152 774v16M158 832l-4 20M158 884l-5 16"/></g>
                <g class="ink dash" transform="translate(860 650) scale(.33333)"><path d="M157 0l-2 10M158 44q-8 14-1 26M164 88l-6 12h14M214 108l6 4 32-6M296 112l38-4M390 112l42-4M476 108l34 6M586 109h38M697 94l8 2M770 120q0 20 8 38M774 200l-4 18M774 272q-8 10-3 20M774 326q-6 8-1 16M782 388l-6 8M785 422q-10 10-4 20M788 470q-10 4-10 14M730 501q30 2 40-8M645 508l-26 6M587 516l-28 4M490 523h-14M452 518l-20 6M412 521l-20 3M340 536l-16 4M296 537l-24 4M240 530l-14 6M200 538h-6M194 558v22M200 670l-2 10M199 698l-4 22"/></g>
                <g class="ink mark" transform="translate(860 370) scale(.33333)">
                  <path d="M92 364q6-20 16-26l22 8M108 338q8 70 5 148M105 492q4-20 10-28 30-6 42 12M118 446q40-22 82 0 40 28 32 80-20 58-72 60-52 4-68-50-2-60 28-92M208 518q70-2 190-28M362 482q4-10 26-8l-2 8 18 8-30 6M131 556l2 130M134 600v84M108 658l28 30M137 688q16-10 14-42M124 652l8 34 16-20 16-4M67 546l-67-4"/>
                </g>
                <g class="ink mark" transform="translate(540 450) scale(.33333)"><path d="M1028 300q-120 0-210 10M815 306q18-20 40-18-20 14-44 22M805 307q10 4 30 6"/></g>
                <g class="ink mark" transform="translate(860 650) scale(.33333)"><path d="M116 668q6-26 22-28 16 6 18 18M112 652q12-22 50-22l32 4q50 40 56 80-16 66-80 98-28 4-52-10-36-46-30-84 4-40 34-76"/></g>
                <g class="ink mark" transform="translate(1180 240) scale(.4719 .33333)"><path d="M586 526v-34l26 36q6 6 10 2l2-40M628 712q-2-60-12-136M608 612l2-36 32 10M612 580l14 16M601 742q6-30 32-34 26 4 22 38-10 24-36 26-18-8-18-30zM606 738l-134 12M465 750l20-14 14 4-12 20M465 750l30 6M642 735h128M758 724q10 4 12 10l-10 8M653 762l-4 136M659 758l4 142M624 890l32 42 36-52M650 912l14-24M642 912l22 6M400 698q4-14 14-10 22 8 20 36-4 16-12 12M388 724l2 10q-4 16 2 22l10-14M398 748q4 6 4-6M840 692l-20 2q-4 20-2 42M806 720q-4-16 12-12M808 724q2 10 14 6l16-8M820 738l-8 20 40-6M660 972q-24 4-16 12 20 16 18 30-16 2-24-16"/></g>
              </svg>
              <div class="gutter gutter-right">
                <svg class="flap" width="20" height="33" viewBox="0 0 20 33"><path d="M20 0H2Q0 0 0 2v29q0 2 2 2h18z" fill="#b0aeb0"/><path d="M13 5L7 8l6 3z" fill="#444"/><path d="M5 16h4v4H5z" fill="#e3a21a"/><path d="M12 16l4 2-4 3z" fill="#2e6bb8"/><path d="M9 22v5l-4-2z" fill="#7a9b20"/><circle cx="14" cy="24.500" r="2.500" fill="#f0831c"/></svg>
              </div>
            </div>
            <div class="speed">1.00</div>
            <div class="notes-fab"><svg width="26" height="26" viewBox="0 0 26 26"><rect x=".5" y=".5" width="19" height="25" fill="#fff"/><path d="M4 5h6M4 21.500h4" stroke="#373e9e" stroke-width="1.300"/><path d="M4 8h12v10H4z" fill="#c9ccee"/><path d="M4 8.500h12M4 11.500h12M4 14.500h12M4 17.500h12" stroke="#373e9e" stroke-width="1.100"/><path d="M22 3h4M22 5.500h4v14h-4zM22.500 21h3L24 24z" fill="#fff" stroke="#fff" stroke-width=".8"/></svg><span>Notes</span></div>
          </div>
        </main>
        <i class="scroll-page"></i>
      </div>
    </div>
  </div>
</div>
</body>
</html>
```

FILE: styles.css
```css
* { box-sizing: border-box; }
body { margin: 0; width: 1920px; height: 1080px; overflow: hidden; font-family: "Noto Sans", sans-serif; background: #f8faff; }
svg { display: block; flex: none; }
.defs { position: absolute; width: 0; height: 0; }

/* GNOME top bar */
.topbar { height: 34px; display: flex; align-items: center; padding-left: 12px; position: relative; background: linear-gradient(#57544c, #3d3b36); border-bottom: 1px solid #3f2f42; color: #dbd9d4; font-weight: 600; font-size: 17px; white-space: nowrap; text-shadow: 0 1px 1px #222; }
.activities { width: 103px; letter-spacing: .6px; }
.mini-chrome { margin-right: 6px; }
.appname { width: 141px; letter-spacing: .55px; }
.clock { position: absolute; left: 961px; top: 5px; letter-spacing: .45px; }
.tray { margin-left: auto; }

.desktop { display: flex; height: 1046px; }
.dock { width: 83px; flex: none; display: grid; grid-template-rows: repeat(13, 80px); background: linear-gradient(#505864, #575d60 25%, #53585a 29%, #42423d 34%, #403f39 58%, #4d4a42 72%, #403e38 82%, #5b5951 92%, #4b4942); }
.dock svg { width: 83px; height: 80px; }
.browser { flex: 1; display: flex; flex-direction: column; background: #fff; }

/* tab strip */
.tabstrip { height: 43px; display: flex; background: #dee0e6; align-items: center; }
.tab { display: flex; align-items: center; height: 43px; color: #45484d; font-size: 18px; }
.tab-title { white-space: nowrap; margin-left: 10px; padding-bottom: 2px; letter-spacing: .1px; }
.tab .x { margin-left: auto; }
.tab-first { width: 310px; padding: 0 14px 0 25px; background: linear-gradient(#868a90, #868a90) right center / 1.500px 24px no-repeat; }
.tab-second { width: 298px; padding: 0 13px 0 14px; }
.tab-active { width: 299px; padding: 0 13px 0 21px; background: #fff; border-radius: 10px 10px 0 0; position: relative; }
.tab-active::before, .tab-active::after { content: ""; position: absolute; bottom: 0; width: 10px; height: 10px; }
.tab-active::before { left: -10px; background: radial-gradient(circle at 0 0, transparent 10px, #fff 10.500px); }
.tab-active::after { right: -10px; background: radial-gradient(circle at 100% 0, transparent 10px, #fff 10.500px); }
.t-az { width: 219px; overflow: hidden; letter-spacing: 0; margin-left: 16px; -webkit-mask-image: linear-gradient(90deg, #000 83%, transparent); mask-image: linear-gradient(90deg, #000 83%, transparent); }
.newtab { margin-left: 20px; }
.winctl { margin-left: auto; }

/* address bar */
.toolbar { height: 45px; display: flex; align-items: flex-start; }
.omnibox { width: 1488px; height: 35px; margin-top: 5px; border-radius: 18px; background: #f1f3f4; display: flex; align-items: center; padding: 0 6px 0 16px; }
.url { margin-left: 14px; font-size: 17px; letter-spacing: -.037px; color: #6b6e73; white-space: nowrap; }
.url b { font-weight: 400; color: #202124; }
.omni-icons { margin-left: auto; }

/* bookmarks */
.bookmarks { height: 42px; border-bottom: 1px solid #d7d9dd; display: grid; grid-template-columns: 93px 40px 42px 184px 42px 181px 190px 189px 151px 189px 334px 23px 1fr; padding-left: 19px; align-items: center; font-size: 18px; color: #3c4043; white-space: nowrap; padding-bottom: 4px; }
.bm { display: flex; align-items: center; gap: 11px; }
.bm svg { overflow: visible; }
.bm span, .reading span { padding-bottom: 2px; }
.bm-wide { letter-spacing: .35px; }
.bm-main { gap: 10px; letter-spacing: .15px; }
.bm-tight { gap: 10px; letter-spacing: -.05px; }
.more { font-size: 17px; line-height: 20px; padding-bottom: 2px; }
.reading { display: flex; gap: 11px; align-items: center; border-left: 1px solid #d0d2d5; padding-left: 13px; color: #202124; height: 22px; letter-spacing: -.05px; }

/* site header */
.page { flex: 1; display: flex; flex-direction: column; background: #f8faff; min-height: 0; }
.site-header { height: 77px; width: 1833px; flex: none; background: #fff; display: flex; align-items: center; padding: 0 33px 0 26px; border-radius: 0 8px 8px 0; box-shadow: 0 2px 6px rgba(60, 64, 90, .16); position: relative; z-index: 2; }
.brand { font-family: "Open Sans", sans-serif; font-weight: 800; font-size: 31px; color: #3a3f9f; margin-left: 3px; letter-spacing: -1.300px; transform: scaleX(.94); transform-origin: left center; padding-top: 2px; }
.site-nav { margin-left: auto; display: flex; align-items: center; font-family: Inter, sans-serif; font-weight: 500; font-size: 22px; letter-spacing: .4px; color: #7f7f7f; }
.n1 { width: 162px; }
.n2 { width: 112px; }
.n3 { width: 130px; }

.content { flex: 1; display: flex; min-height: 0; position: relative; }
.sidebar { width: 399px; background: #fff; position: relative; font-family: "Liberation Sans", Arial, sans-serif; font-weight: 700; color: #373e9e; overflow: hidden; }
.select { margin: 33px 0 33px 14px; width: 344px; height: 85px; border: 1px solid #373e9e; border-radius: 3px; background: #e3e7ff; display: flex; align-items: center; justify-content: space-between; padding: 0 15px 1px 28px; font-size: 19px; letter-spacing: .13px; white-space: nowrap; }
.lessons { list-style: none; margin: 0; padding: 0; }
.lessons li { height: 142px; margin-bottom: 6.750px; padding: 18px 0 0 14px; background: linear-gradient(#cbd1e6, #cbd1e6) 20px 100% / 359px 1px no-repeat; }
.lessons .current { background-color: #eff1ff; }
.row { display: flex; align-items: center; gap: 11px; font-size: 19px; letter-spacing: .13px; }
.row span { padding-top: 5px; }
.lessons label { display: flex; align-items: center; margin: 47px 0 0 64px; font-size: 18px; line-height: 17px; letter-spacing: -.06px; color: #5560be; }
.lessons input { margin: 0 5px 0 0; width: 17px; height: 17px; }
.scroll-side { position: absolute; right: 0; top: 0; width: 5px; height: 454px; border-radius: 3px; background: #c7d1fc; }
.scroll-page { position: absolute; right: 0; top: 15px; width: 4px; bottom: 0; background: #c7d1fc; border-radius: 2px 0 0 0; }

/* lesson view */
.lesson { margin-left: 70px; width: 1294px; }
.viewtabs { display: flex; height: 64px; background: #f0f1ff; font-family: Inter, sans-serif; font-weight: 500; font-size: 19px; color: #9a9a9a; }
.vt { display: flex; align-items: center; }
.vt-live { width: 439px; background: #373d9e; color: #fff; padding: 0 0 17px 141px; gap: 11px; letter-spacing: .3px; }
.vt-lecture { padding-left: 140px; padding-bottom: 1px; width: 596px; gap: 11px; letter-spacing: .55px; }
.vt-notes { gap: 6px; padding-bottom: 4px; letter-spacing: .1px; }
.video { position: relative; height: 727px; background: #f0eef0; box-shadow: 0 2px 8px rgba(60, 64, 110, .12); }
.boardbar { background: #aba9ab; }
.stage { display: flex; height: 680px; }
.gutter { width: 102px; flex: none; padding-top: 10px; }
.gutter-right .flap { margin-left: 82px; }
.palette { margin: 68px 0 0 3px; width: 45px; height: 457px; background: #aeacae; border-radius: 6px; box-shadow: inset 0 0 0 3px #a09ea0; }
.ink path { fill: none; stroke: #fff; stroke-width: 2; stroke-linecap: round; stroke-linejoin: round; vector-effect: non-scaling-stroke; }
.dash path { stroke: #55a5f5; stroke-width: 1.900; }
.mark path { stroke: #fdfb05; stroke-width: 2.100; }
.speed { position: absolute; left: 21px; top: 13px; width: 67px; height: 49px; border-radius: 24px; background: rgba(118, 116, 118, .62); color: #d9d9d9; font-size: 17px; line-height: 49px; text-align: center; }
.notes-fab { position: absolute; left: 1208px; top: 625px; width: 69px; height: 68px; border-radius: 50%; background: #373e9e; color: #fff; display: flex; flex-direction: column; align-items: center; padding-top: 15px; font: 700 9px "Liberation Serif", serif; }
.notes-fab svg { margin-left: 1px; }
.notes-fab span { margin: 4px 5px 0 0; }
```
